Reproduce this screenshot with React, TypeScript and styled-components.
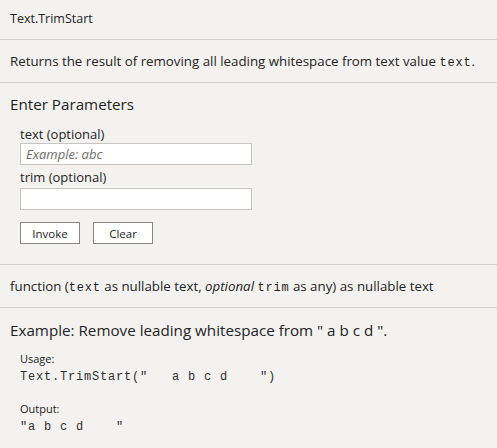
import styled, { createGlobalStyle } from 'styled-components';

const GlobalStyle = createGlobalStyle`
    html, body {
        margin: 0;
        padding: 0;
        background: #f3f2f1;
    }
    body {
        font-family: 'Open Sans', 'Noto Sans', sans-serif;
        color: #252423;
    }
`;

const Page = styled.div`
    display: flex;
    flex-direction: column;
    width: 497px;
    min-height: 448px;
    background: #f3f2f1;
`;

const Section = styled.div<{ $pad: string; $last?: boolean }>`
    padding: ${(p) => p.$pad};
    border-bottom: ${(p) => (p.$last ? 'none' : '1px solid #d2d0ce')};
`;

const Line = styled.div<{ $size: number }>`
    font-size: ${(p) => p.$size}px;
    line-height: 16px;
    white-space: nowrap;
`;

const Mono = styled.span`
    font-family: 'Liberation Mono', 'Courier New', monospace;
    font-size: 12px;
    line-height: 1;
    letter-spacing: 0.8px;
`;

const Heading = styled.div`
    font-size: 15.2px;
    line-height: 20px;
    white-space: nowrap;
`;

const Indent = styled.div`
    display: flex;
    flex-direction: column;
    padding-left: 10px;
`;

const Label = styled.label`
    font-size: 13px;
    line-height: 16px;
`;

const TextInput = styled.input<{ $gap: number }>`
    box-sizing: border-box;
    width: 232px;
    height: 22px;
    margin: ${(p) => p.$gap}px 0 0;
    padding: 0 5px;
    border: 1px solid #c8c6c4;
    background: #ffffff;
    font-family: inherit;
    font-size: 13px;
    color: #252423;
    outline: none;

    &::placeholder {
        font-style: italic;
        color: #6e6c6a;
    }
`;

const Field = styled.div<{ $top: number }>`
    display: flex;
    flex-direction: column;
    margin-top: ${(p) => p.$top}px;
`;

const ButtonRow = styled.div`
    display: flex;
    gap: 13px;
    margin-top: 12px;
`;

const ActionButton = styled.button`
    box-sizing: border-box;
    width: 60px;
    height: 22px;
    padding: 0;
    border: 1px solid #8a8886;
    background: #ffffff;
    font-family: inherit;
    font-size: 11.5px;
    color: #252423;
    cursor: pointer;
`;

const SmallLabel = styled.div<{ $top: number }>`
    font-size: 11px;
    line-height: 15px;
    margin-top: ${(p) => p.$top}px;
`;

const CodeLine = styled.pre`
    margin: 3px 0 0;
    font-family: 'Liberation Mono', 'Courier New', monospace;
    font-size: 12px;
    line-height: 16px;
    letter-spacing: 0.8px;
    color: #323130;
`;

function App() {
    return (
        <Page>
            <GlobalStyle />
            <Section $pad="11px 10px 12px">
                <Line $size={12.5}>Text.TrimStart</Line>
            </Section>
            <Section $pad="13px 10px 13px">
                <Line $size={13.3}>
                    Returns the result of removing all leading whitespace from text value <Mono>text</Mono>.
                </Line>
            </Section>
            <Section $pad="11px 10px 20px">
                <Heading>Enter Parameters</Heading>
                <Indent>
                    <Field $top={12}>
                        <Label>text (optional)</Label>
                        <TextInput $gap={1} placeholder="Example: abc" />
                    </Field>
                    <Field $top={4}>
                        <Label>trim (optional)</Label>
                        <TextInput $gap={3} />
                    </Field>
                    <ButtonRow>
                        <ActionButton>Invoke</ActionButton>
                        <ActionButton>Clear</ActionButton>
                    </ButtonRow>
                </Indent>
            </Section>
            <Section $pad="13px 10px 13px">
                <Line $size={13.3}>
                    function (<Mono>text</Mono> as nullable text, <i>optional</i> <Mono>trim</Mono> as any) as
                    nullable text
                </Line>
            </Section>
            <Section $pad="12px 10px 12px" $last>
                <Heading>Example: Remove leading whitespace from " a b c d ".</Heading>
                <Indent>
                    <SmallLabel $top={11}>Usage:</SmallLabel>
                    <CodeLine>{'Text.TrimStart("   a b c d    ")'}</CodeLine>
                    <SmallLabel $top={16}>Output:</SmallLabel>
                    <CodeLine>{'"a b c d    "'}</CodeLine>
                </Indent>
            </Section>
        </Page>
    );
}

export default App;
